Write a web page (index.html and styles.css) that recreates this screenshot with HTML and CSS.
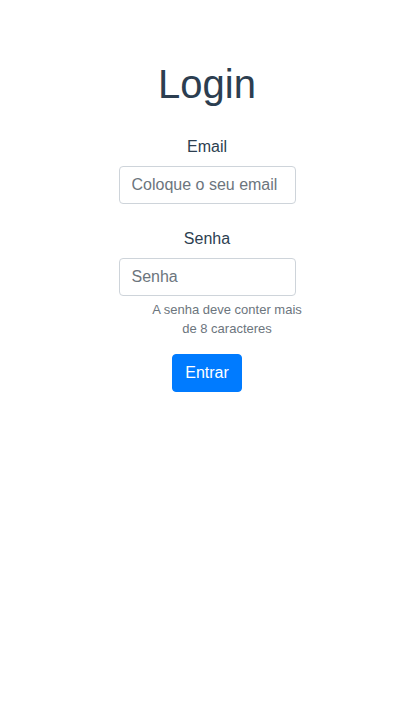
FILE: index.html
```html
<!DOCTYPE html>
<html lang="pt">
<head>
<meta charset="utf-8">
<title>Login</title>
<link rel="stylesheet" href="styles.css">
</head>
<body>
<div class="app">
  <h1 class="title">Login</h1>
  <form class="form">
    <div class="group group-email">
      <label class="label" for="email">Email</label>
      <input class="control" id="email" type="email" placeholder="Coloque o seu email">
    </div>
    <div class="group group-pass">
      <label class="label" for="senha">Senha</label>
      <input class="control" id="senha" type="password" placeholder="Senha">
      <small class="help">A senha deve conter mais de 8 caracteres</small>
    </div>
    <button class="btn" type="button">Entrar</button>
  </form>
</div>
</body>
</html>
```
FILE: styles.css
```css
html, body {
  margin: 0;
  padding: 0;
  background: #fff;
}
body {
  font-family: "Liberation Sans", Arial, sans-serif;
  font-size: 16px;
  line-height: 1.5;
  color: #2c3e50;
}
.app {
  padding-top: 60px;
  text-align: center;
}
.title {
  margin: 0 0 26px;
  font-size: 40px;
  font-weight: 500;
  line-height: 1.2;
}
.form {
  display: flex;
  flex-direction: column;
  align-items: center;
}
.group {
  display: flex;
  flex-direction: column;
  align-items: center;
}
.group-email {
  margin-bottom: 22px;
}
.group-pass {
  margin-bottom: 16px;
}
.label {
  display: block;
  padding-top: 1px;
  margin-bottom: 7px;
  color: #2c3e50;
}
.control {
  box-sizing: border-box;
  width: 177px;
  height: 38px;
  padding: 6px 12px;
  font-family: inherit;
  font-size: 16px;
  line-height: 1.5;
  color: #495057;
  background: #fff;
  border: 1px solid #ced4da;
  border-radius: 4px;
  outline: none;
}
.control::placeholder {
  color: #6c757d;
  opacity: 1;
}
.help {
  display: block;
  box-sizing: content-box;
  width: 162px;
  padding-left: 40px;
  margin-top: 4px;
  font-size: 13px;
  line-height: 19px;
  color: #6c757d;
  text-align: center;
}
.btn {
  box-sizing: border-box;
  height: 38px;
  padding: 6px 12px;
  font-family: inherit;
  font-size: 16px;
  line-height: 1.5;
  color: #fff;
  background: #007bff;
  border: 1px solid #007bff;
  border-radius: 4px;
}
```
